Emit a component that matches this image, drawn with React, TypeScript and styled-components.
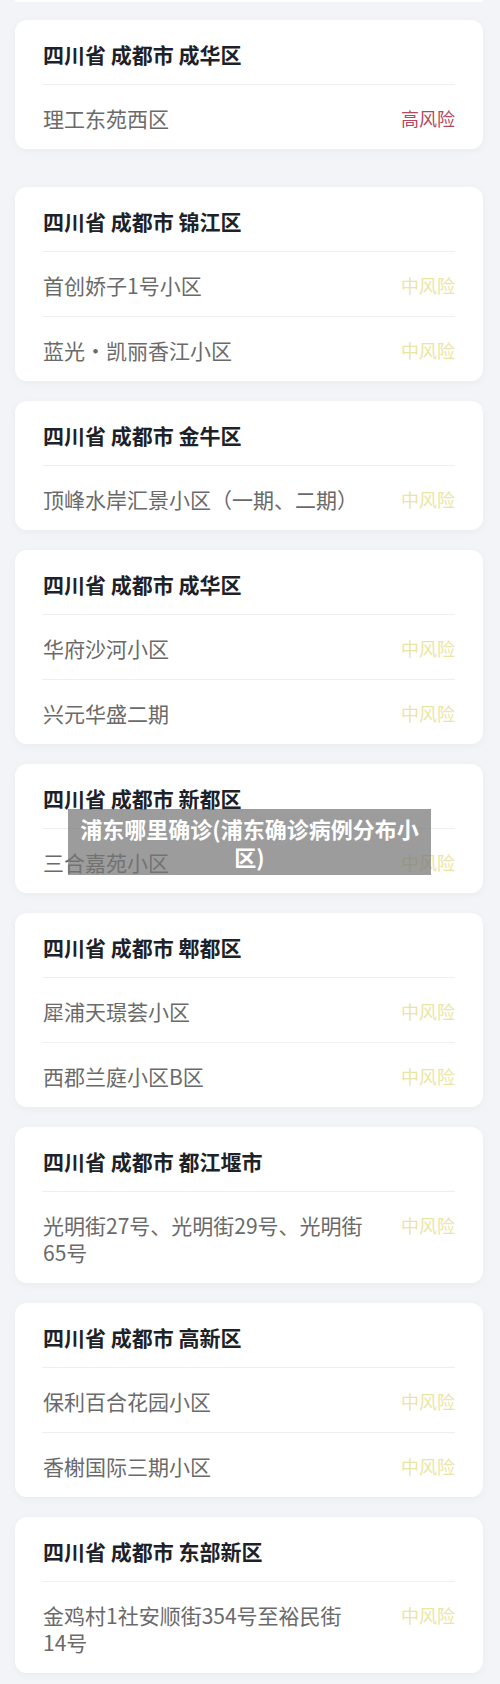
import React from 'react';
import styled, { createGlobalStyle } from 'styled-components';

type Risk = 'high' | 'mid';

interface Area {
  name: string;
  risk: Risk;
}

interface District {
  title: string;
  areas: Area[];
}

const DISTRICTS: District[] = [
  { title: '四川省 成都市 成华区', areas: [{ name: '理工东苑西区', risk: 'high' }] },
  {
    title: '四川省 成都市 锦江区',
    areas: [
      { name: '首创娇子1号小区', risk: 'mid' },
      { name: '蓝光・凯丽香江小区', risk: 'mid' },
    ],
  },
  { title: '四川省 成都市 金牛区', areas: [{ name: '顶峰水岸汇景小区（一期、二期）', risk: 'mid' }] },
  {
    title: '四川省 成都市 成华区',
    areas: [
      { name: '华府沙河小区', risk: 'mid' },
      { name: '兴元华盛二期', risk: 'mid' },
    ],
  },
  { title: '四川省 成都市 新都区', areas: [{ name: '三合嘉苑小区', risk: 'mid' }] },
  {
    title: '四川省 成都市 郫都区',
    areas: [
      { name: '犀浦天璟荟小区', risk: 'mid' },
      { name: '西郡兰庭小区B区', risk: 'mid' },
    ],
  },
  { title: '四川省 成都市 都江堰市', areas: [{ name: '光明街27号、光明街29号、光明街65号', risk: 'mid' }] },
  {
    title: '四川省 成都市 高新区',
    areas: [
      { name: '保利百合花园小区', risk: 'mid' },
      { name: '香榭国际三期小区', risk: 'mid' },
    ],
  },
  { title: '四川省 成都市 东部新区', areas: [{ name: '金鸡村1社安顺街354号至裕民街14号', risk: 'mid' }] },
];

const RISK_LABEL: Record<Risk, string> = {
  high: '高风险',
  mid: '中风险',
};

const App: React.FC = () => {
  return (
    <>
      <GlobalStyle />
      <Page>
        <CardStub />
        {DISTRICTS.map((d, i) => (
          <Card key={i} spaced={i === 1}>
            <CardTitle>{d.title}</CardTitle>
            {d.areas.map((a, j) => (
              <Row key={j}>
                <AreaName>{a.name}</AreaName>
                <RiskTag risk={a.risk}>{RISK_LABEL[a.risk]}</RiskTag>
              </Row>
            ))}
          </Card>
        ))}
        <Caption>浦东哪里确诊(浦东确诊病例分布小区)</Caption>
      </Page>
    </>
  );
};

export default App;

const GlobalStyle = createGlobalStyle`
  html, body {
    margin: 0;
    padding: 0;
    background: #f2f4f7;
  }
  body {
    font-family: 'Noto Sans CJK SC', 'Noto Sans', sans-serif;
  }
`;

const Page = styled.div`
  position: relative;
  width: 500px;
  height: 1684px;
  box-sizing: border-box;
  padding: 0 17px 0 15px;
  display: flex;
  flex-direction: column;
  gap: 20px;
  overflow: hidden;
`;

const CardStub = styled.div`
  height: 2px;
  margin-bottom: -2px;
  background: #ffffff;
  border-radius: 0 0 4px 4px;
`;

const Card = styled.div<{ spaced?: boolean }>`
  background: #ffffff;
  border-radius: 12px;
  box-shadow: 0 2px 8px rgba(30, 50, 80, 0.04);
  padding: 0 28px 0 27px;
  margin-top: ${(p) => (p.spaced ? '18px' : '0')};
`;

const CardTitle = styled.div`
  padding: 20px 0 16px 1px;
  font-size: 21px;
  line-height: 28px;
  font-weight: 700;
  color: #1d2228;
`;

const Row = styled.div`
  display: flex;
  align-items: flex-start;
  border-top: 1px solid #eeeff1;
  padding: 20px 0 17px;
`;

const AreaName = styled.div`
  flex: 1;
  min-width: 0;
  padding-left: 1px;
  font-size: 21px;
  line-height: 27px;
  color: #6a6a6a;
`;

const RiskTag = styled.div<{ risk: Risk }>`
  flex: none;
  margin-left: 38px;
  font-size: 18px;
  line-height: 27px;
  color: ${(p) => (p.risk === 'high' ? '#b3475f' : '#ebe5a4')};
`;

const Caption = styled.div`
  position: absolute;
  left: 68px;
  top: 809px;
  width: 363px;
  box-sizing: border-box;
  padding: 5px 10px;
  background: rgba(118, 118, 118, 0.72);
  color: #ffffff;
  font-size: 22px;
  line-height: 28px;
  font-weight: 700;
  text-align: center;
`;
